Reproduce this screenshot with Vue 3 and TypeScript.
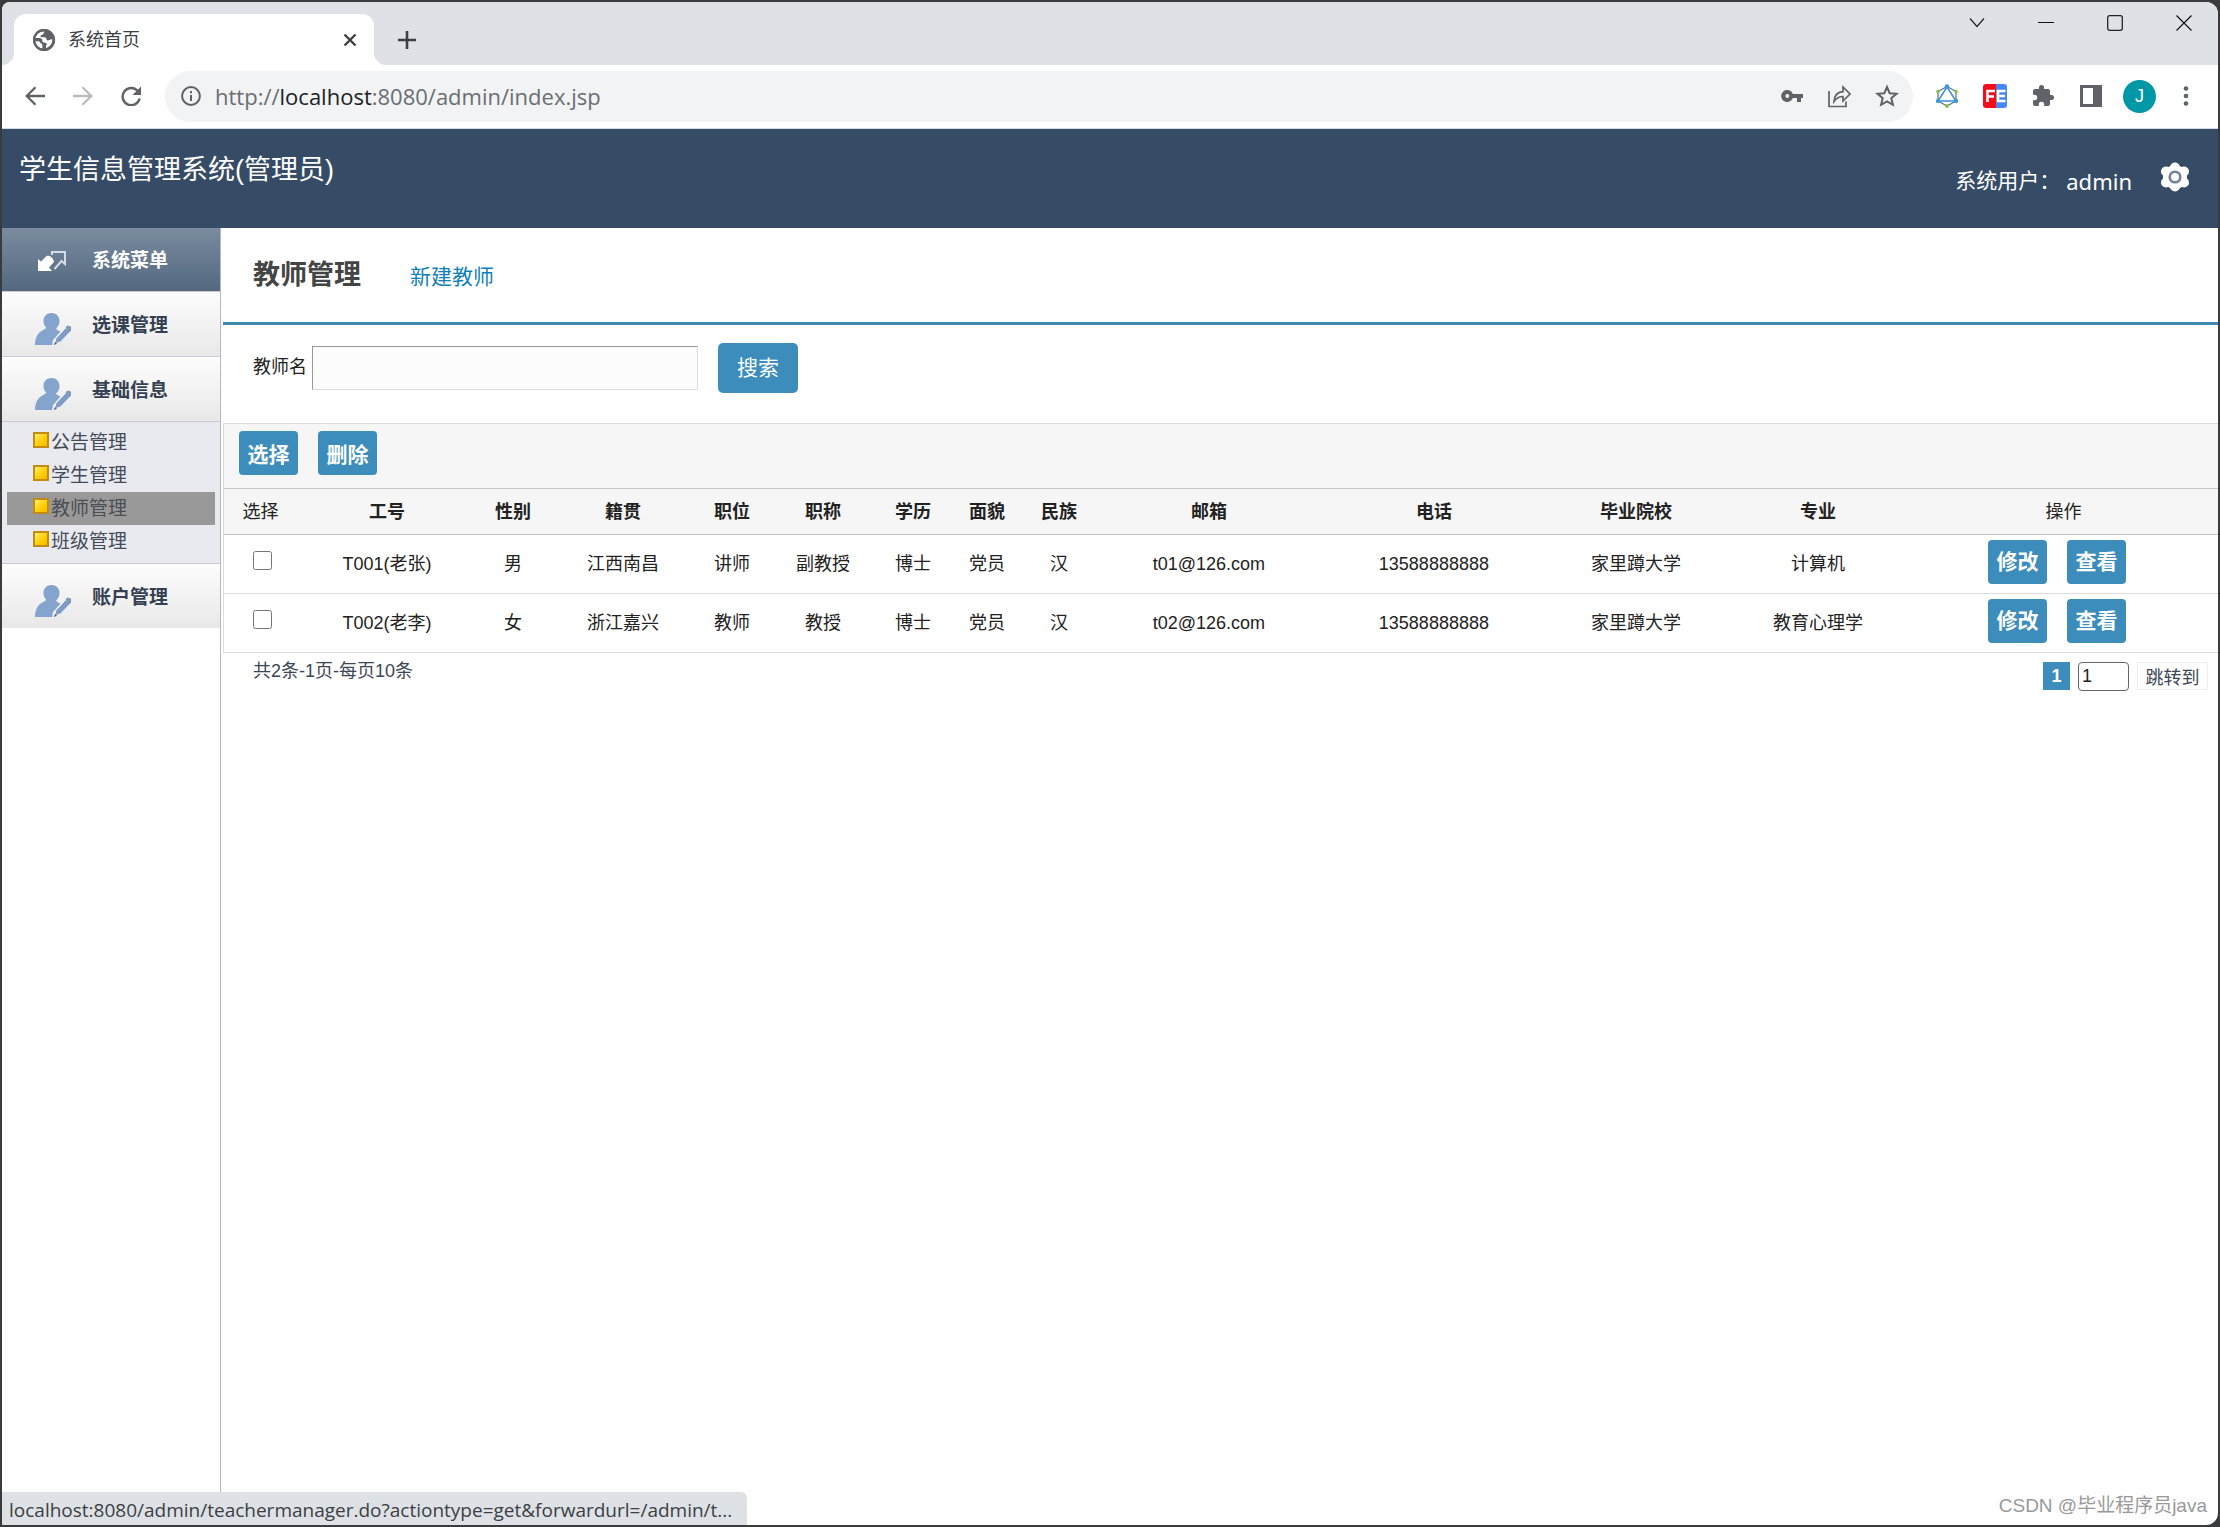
<script setup lang="ts">
import { reactive, ref } from 'vue'

interface Column { key: string; label: string; share: number }
interface Teacher { [key: string]: string }

const tableShare = 1994
const columns: Column[] = [
  { key: 'id', label: '工号', share: 180 },
  { key: 'sex', label: '性别', share: 72 },
  { key: 'origin', label: '籍贯', share: 148 },
  { key: 'post', label: '职位', share: 70 },
  { key: 'rank', label: '职称', share: 112 },
  { key: 'degree', label: '学历', share: 68 },
  { key: 'party', label: '面貌', share: 80 },
  { key: 'nation', label: '民族', share: 64 },
  { key: 'email', label: '邮箱', share: 236 },
  { key: 'phone', label: '电话', share: 214 },
  { key: 'school', label: '毕业院校', share: 190 },
  { key: 'major', label: '专业', share: 174 },
]
const teachers: Teacher[] = [
  { id: 'T001(老张)', sex: '男', origin: '江西南昌', post: '讲师', rank: '副教授', degree: '博士', party: '党员', nation: '汉', email: 't01@126.com', phone: '13588888888', school: '家里蹲大学', major: '计算机' },
  { id: 'T002(老李)', sex: '女', origin: '浙江嘉兴', post: '教师', rank: '教授', degree: '博士', party: '党员', nation: '汉', email: 't02@126.com', phone: '13588888888', school: '家里蹲大学', major: '教育心理学' },
]
const groups = [
  { label: '选课管理', items: [] as string[] },
  { label: '基础信息', items: ['公告管理', '学生管理', '教师管理', '班级管理'] },
  { label: '账户管理', items: [] as string[] },
]
const active = ref('教师管理')
const keyword = ref('')
const page = ref('1')
const checked = reactive<Record<string, boolean>>({})
const width = (share: number) => ({ width: (share / tableShare) * 100 + '%' })
</script>

<template>
  <div class="desktop">
    <div class="window">
      <div class="tabstrip">
        <div class="tab">
          <svg class="globe" viewBox="0 0 24 24" width="24" height="24">
            <circle cx="12" cy="12" r="11" fill="#5f6368" />
            <path d="M12.500 3.500c-1 1-.5 2-1.500 2.800-1 .8-2.500.5-2.500 2 0 .9 1 1 1.800 1 1.200.1 3.500-.3 3.900.9.300 1.200.3 2 1.500 2.200 1.600.2 2-1.500 4.600-1.200.3 4-2.200 7.500-6.300 8.800v-2.200c1-.6 1-2 .1-2.700-1.200-.8-3.200-.2-3.700-1.700-.3-1.200.2-2-.9-2.700-1.500-.8-4-.6-6.200-.6C4 6.500 7.500 3.200 12.500 3.500zM3.400 13.200l3.900.1c.5 2 1.900 2 2.700 2.900.6 1 .2 3 .6 4.300-3.900-.5-6.900-3.500-7.200-7.300z" fill="#fff" />
            <circle cx="12" cy="12" r="10" fill="none" stroke="#5f6368" stroke-width="2" />
          </svg>
          <span class="tab-title">系统首页</span>
          <button class="bare" aria-label="关闭标签页">
            <svg viewBox="0 0 14 14" width="14" height="14"><path d="M1.500 1.500l11 11M12.500 1.500l-11 11" stroke="#3c4043" stroke-width="2.400" /></svg>
          </button>
        </div>
        <button class="bare new-tab" aria-label="新标签页">
          <svg viewBox="0 0 18 18" width="18" height="18"><path d="M9 0v18M0 9h18" stroke="#3c4043" stroke-width="2.600" /></svg>
        </button>
        <div class="controls">
          <button class="bare" aria-label="搜索标签页"><svg viewBox="0 0 16 16" width="16" height="16"><path d="M1 3.500l7 8 7-8" fill="none" stroke="#222" stroke-width="1.200" /></svg></button>
          <button class="bare" aria-label="最小化"><svg viewBox="0 0 16 16" width="16" height="16"><path d="M0 7.500h16" stroke="#111" /></svg></button>
          <button class="bare" aria-label="最大化"><svg viewBox="0 0 16 16" width="16" height="16"><rect x=".7" y=".7" width="14.600" height="14.600" rx="2" fill="none" stroke="#222" stroke-width="1.300" /></svg></button>
          <button class="bare" aria-label="关闭"><svg viewBox="0 0 16 16" width="16" height="16"><path d="M.5.5l15 15M15.500.5l-15 15" stroke="#111" stroke-width="1.200" /></svg></button>
        </div>
      </div>

      <div class="toolbar">
        <div class="nav">
          <button class="bare" aria-label="后退"><svg viewBox="0 0 20 20" width="20" height="20"><path d="M20 10H2M10.500 1.200L1.700 10l8.800 8.800" fill="none" stroke="#5f6368" stroke-width="2.300" /></svg></button>
          <button class="bare" aria-label="前进"><svg viewBox="0 0 20 20" width="20" height="20"><path d="M0 10h18M9.500 1.200l8.800 8.800-8.800 8.800" fill="none" stroke="#babcbe" stroke-width="2.300" /></svg></button>
          <button class="bare" aria-label="刷新"><svg viewBox="0 0 20 20" width="20" height="20"><path d="M17 5.300A8.600 8.600 0 1 0 18.600 12.500" fill="none" stroke="#5f6368" stroke-width="2.400" /><path d="M20 .5v8.500h-8.500z" fill="#5f6368" /></svg></button>
        </div>
        <div class="omnibox">
          <svg viewBox="0 0 20 20" width="20" height="20"><circle cx="10" cy="10" r="8.900" fill="none" stroke="#5f6368" stroke-width="2" /><path d="M9 9h2v6H9zM9 5h2v2.200H9z" fill="#5f6368" /></svg>
          <span class="url">http://<b>localhost</b>:8080/admin/index.jsp</span>
          <div class="omni-icons">
            <svg viewBox="0 0 22 22" width="22" height="22"><path d="M6.300 5a6 6 0 0 1 5.500 4H22v4h-2v4h-4v-4h-4.200A6 6 0 1 1 6.300 5zm0 4a2 2 0 1 0 0 4 2 2 0 0 0 0-4z" fill="#5f6368" fill-rule="evenodd" /></svg>
            <svg viewBox="0 0 24 24" width="24" height="24"><path d="M2 7v15.500h17V17.500M7 17.500c.5-6 3.500-9.500 9-9.800V3l7 7-7 7v-4.500c-4 0-6.500 1.500-9 5z" fill="none" stroke="#5f6368" stroke-width="1.700" /></svg>
            <svg viewBox="0 0 24 24" width="24" height="24"><path d="M12 3l2.700 6.200 6.800.6-5.200 4.400 1.600 6.600L12 17.300l-5.900 3.500 1.600-6.600-5.200-4.400 6.800-.6z" fill="none" stroke="#5f6368" stroke-width="2" /></svg>
          </div>
        </div>
        <div class="extensions">
          <svg viewBox="0 0 24 24" width="24" height="24">
            <path d="M12 2.500l9 5v9.500l-9 5-9-5V7.500z" fill="none" stroke="#5b7083" stroke-width="1.200" />
            <path d="M12 3L3 17h18z" fill="none" stroke="#3b8fd8" stroke-width="1.500" />
            <g fill="#3b9be0"><circle cx="12" cy="2.500" r="2.200" /><circle cx="3" cy="17" r="2.200" /><circle cx="21" cy="17" r="2.200" /></g>
            <g fill="#84c441"><circle cx="3" cy="7.500" r="1.800" /><circle cx="21" cy="7.500" r="1.800" /><circle cx="12" cy="22" r="1.900" /></g>
          </svg>
          <svg viewBox="0 0 24 24" width="24" height="24">
            <path d="M3 0h10v24H3a3 3 0 0 1-3-3V3a3 3 0 0 1 3-3z" fill="#f20d18" /><path d="M13 0h8a3 3 0 0 1 3 3v18a3 3 0 0 1-3 3h-8z" fill="#4787f0" />
            <path d="M12 7H4.500v11M4.500 12.500H11" fill="none" stroke="#fff" stroke-width="2.600" /><path d="M22.500 7H15v10h7.500M15 12h7" fill="none" stroke="#fff" stroke-width="2.600" />
          </svg>
          <svg viewBox="0 0 24 24" width="24" height="24"><path d="M20.500 11H19V7a2 2 0 0 0-2-2h-4V3.500a2.500 2.500 0 0 0-5 0V5H4a2 2 0 0 0-2 2v3.800h1.500a2.700 2.700 0 0 1 0 5.400H2V20a2 2 0 0 0 2 2h3.800v-1.500a2.700 2.700 0 0 1 5.400 0V22H17a2 2 0 0 0 2-2v-4h1.500a2.500 2.500 0 0 0 0-5z" fill="#5f6368" /></svg>
          <svg viewBox="0 0 24 24" width="24" height="24"><path d="M1 1h22v22H1zM4 4v16h10V4z" fill="#5f6368" fill-rule="evenodd" /></svg>
          <span class="avatar">J</span>
          <svg class="dots" viewBox="0 0 6 20" width="6" height="20"><g fill="#5f6368"><circle cx="3" cy="2.500" r="2.300" /><circle cx="3" cy="10" r="2.300" /><circle cx="3" cy="17.500" r="2.300" /></g></svg>
        </div>
      </div>

      <header class="banner">
        <h1>学生信息管理系统(管理员)</h1>
        <div class="user">
          <span>系统用户：</span><span class="name">admin</span>
          <button class="bare gear" aria-label="设置">
            <svg viewBox="0 0 30 30" width="30" height="30"><g fill="#fff"><circle cx="15" cy="15" r="12" /><circle cx="15" cy="5.500" r="5" /><circle cx="15" cy="24.500" r="5" /><circle cx="6" cy="9.500" r="5" /><circle cx="24" cy="9.500" r="5" /><circle cx="6" cy="20.500" r="5" /><circle cx="24" cy="20.500" r="5" /></g><circle cx="15" cy="15" r="5.300" fill="#fff" stroke="#71819a" stroke-width="2.600" /></svg>
          </button>
        </div>
      </header>

      <div class="body">
        <nav class="sidebar">
          <div class="menu-head">
            <svg viewBox="0 0 28 20" width="28" height="20"><path d="M14 4V1h13v12l-3.500-3-7 8" fill="none" stroke="#d5dde6" stroke-width="2" /><path d="M0 20V8l3 2.500 5.500-5.500c3-1 7 2 7.500 6l-5 5.500 3 3.500z" fill="#fff" /></svg>
            <span>系统菜单</span>
          </div>
          <template v-for="g in groups" :key="g.label">
            <button class="group">
              <svg viewBox="0 0 36 32" width="36" height="32">
                <path d="M16.500 0c4.800 0 8 3.500 8 8 0 3-1.300 5.500-3.500 7.500.5 1.500 2.500 2.300 4.500 3L18 27l-1 5H0C0 24 3 19.500 9 16.500c2-1 2.500-1.500 1.800-2.500C9.300 12.500 8.500 10.500 8.500 8c0-4.500 3.200-8 8-8z" fill="#84a3cd" />
                <path d="M19.500 31l1.300-5.500L31 14.500l4.500 4L25.500 29z" fill="#7f9cc6" stroke="#eef1f6" stroke-width="1" />
                <path d="M30.500 14.500l2-2 3.500 1v4l-1.500 1.500z" fill="#8399bb" /><path d="M18.800 32l1.200-3 2 1.800z" fill="#53627b" />
              </svg>
              <span>{{ g.label }}</span>
            </button>
            <ul v-if="g.items.length" class="submenu">
              <li v-for="item in g.items" :key="item">
                <a href="#" :class="{ active: item === active }" @click.prevent="active = item"><i class="bullet"></i>{{ item }}</a>
              </li>
            </ul>
          </template>
        </nav>

        <main class="content">
          <div class="heading">
            <h2>教师管理</h2>
            <a href="#">新建教师</a>
          </div>
          <form class="search" @submit.prevent>
            <label for="teacher-name">教师名</label>
            <input id="teacher-name" v-model="keyword" type="text" />
            <button type="submit">搜索</button>
          </form>
          <section class="panel">
            <div class="actions">
              <button class="btn">选择</button>
              <button class="btn">删除</button>
            </div>
            <table>
              <colgroup>
                <col :style="width(73)" />
                <col v-for="c in columns" :key="c.key" :style="width(c.share)" />
                <col :style="width(313)" />
              </colgroup>
              <thead>
                <tr>
                  <th class="plain">选择</th>
                  <th v-for="c in columns" :key="c.key">{{ c.label }}</th>
                  <th class="plain ops">操作</th>
                </tr>
              </thead>
              <tbody>
                <tr v-for="t in teachers" :key="t.id">
                  <td><input v-model="checked[t.id]" type="checkbox" :aria-label="t.id" /></td>
                  <td v-for="c in columns" :key="c.key">{{ t[c.key] }}</td>
                  <td><div class="row-actions"><button class="btn">修改</button><button class="btn">查看</button></div></td>
                </tr>
              </tbody>
            </table>
          </section>
          <footer class="pager">
            <span class="summary">共2条-1页-每页10条</span>
            <div class="jump">
              <span class="current">1</span>
              <input v-model="page" type="text" aria-label="页码" />
              <button>跳转到</button>
            </div>
          </footer>
        </main>
      </div>
      <div class="status">localhost:8080/admin/teachermanager.do?actiontype=get&amp;forwardurl=/admin/t...</div>
      <div class="watermark">CSDN @毕业程序员java</div>
    </div>
  </div>
</template>

<style>
html, body, #app { height: 100%; margin: 0; }
</style>

<style scoped>
* { box-sizing: border-box; }
.desktop { min-height: 100%; display: flex; padding: 2px; background: #3a3b3c; font-family: "Liberation Sans", "Noto Sans CJK SC", sans-serif; font-size: 18px; color: #222; }
.window { position: relative; flex: 1; display: flex; flex-direction: column; min-width: 0; background: #fff; border-radius: 8px 12px 12px 0; overflow: hidden; }
button, input { font: inherit; margin: 0; }
.bare { display: flex; padding: 0; border: 0; background: none; }
svg { display: block; flex: none; }

.tabstrip { display: flex; align-items: flex-end; height: 63px; padding-left: 12px; background: #dee1e6; }
.tab { position: relative; display: flex; align-items: center; gap: 12px; width: 360px; height: 51px; padding: 0 17px 0 18px; background: #fff; border-radius: 12px 12px 0 0; }
.tab::before, .tab::after { content: ""; position: absolute; bottom: 0; width: 12px; height: 12px; }
.tab::before { left: -12px; background: radial-gradient(circle at 0 0, transparent 12px, #fff 12px); }
.tab::after { right: -12px; background: radial-gradient(circle at 100% 0, transparent 12px, #fff 12px); }
.tab-title { flex: 1; line-height: 26px; color: #3c4043; }
.new-tab { height: 51px; margin-left: 24px; align-items: center; }
.controls { display: flex; align-self: flex-start; gap: 53px; margin-left: auto; padding: 13px 26px 0 0; }

.toolbar { display: flex; align-items: center; height: 64px; padding: 0 29px 1px 23px; border-bottom: 1px solid #d5dbe3; background: #fff; }
.nav { display: flex; gap: 28px; width: 140px; }
.omnibox { flex: 1; display: flex; align-items: center; gap: 14px; height: 51px; padding: 0 14px 0 16px; border-radius: 26px; background: #f1f3f4; }
.url { flex: 1; font-family: "Open Sans", "Noto Sans", sans-serif; font-size: 22px; color: #6a6e72; }
.url b { font-weight: 400; color: #202124; }
.omni-icons { display: flex; align-items: center; gap: 24px; }
.extensions { display: flex; align-items: center; gap: 24px; margin-left: 22px; }
.avatar { width: 33px; height: 33px; margin: 0 -3px 0 -4px; border-radius: 50%; background: #0097a7; color: #fff; font-size: 18px; line-height: 33px; text-align: center; }
.dots { margin-left: 6px; }

.banner { display: flex; justify-content: space-between; align-items: flex-start; height: 99px; padding: 20px 28px 0 17px; background: #364c66; color: #fff; }
h1 { margin: 0; font-size: 27px; font-weight: 400; line-height: 42px; }
.user { display: flex; align-items: center; height: 64px; font-size: 21px; line-height: 30px; }
.name { margin-left: 6px; font-family: "Noto Sans", sans-serif; font-size: 22px; }
.gear { align-self: flex-start; margin: 13px 0 0 28px; }

.body { flex: 1; display: flex; min-height: 0; }
.sidebar { width: 219px; flex: none; border-right: 1px solid #b4b8be; }
.menu-head, .group { display: flex; align-items: center; width: 100%; font-size: 19px; font-weight: 700; line-height: 28px; }
.menu-head { height: 63px; padding: 3px 0 0 36px; gap: 26px; background: linear-gradient(#7a8b9f, #53687f); color: #fff; }
.group { height: 65px; padding: 3px 0 0 33px; gap: 21px; border: 0; border-top: 1px solid #c9cbd0; background: linear-gradient(#fdfdfd, #e8e8e8); color: #354052; }
.group svg { margin-top: 6px; }
.submenu { margin: 0; padding: 4px 5px 5px; list-style: none; border-top: 1px solid #c9cbd0; background: #e8eaef; }
.submenu a { display: flex; align-items: center; height: 33px; padding-left: 26px; gap: 2px; font-size: 19px; line-height: 28px; color: #444b57; text-decoration: none; }
.submenu a.active { background: #999; color: #4b4e54; }
.bullet { width: 16px; height: 16px; margin-bottom: 6px; border: 2px solid #c38a14; background: linear-gradient(135deg, #ffef6a, #fc0 60%, #f5b800); }

.content { flex: 1; min-width: 0; padding-left: 2px; }
.heading { display: flex; align-items: center; gap: 49px; height: 97px; padding-left: 30px; border-bottom: 3px solid #4089b0; }
h2 { margin: 0; font-size: 27px; font-weight: 700; line-height: 40px; color: #444; }
.heading a { font-size: 21px; color: #1080b8; text-decoration: none; }
.search { display: flex; align-items: flex-start; height: 98px; padding: 18px 30px 0; }
.search label { line-height: 48px; }
.search input { width: 386px; height: 44px; margin: 3px 20px 0 5px; padding: 0 8px; border: 1px solid #ddd; border-top-color: #999; border-left-color: #999; background: #fcfcfc; }
.search button { width: 80px; height: 50px; padding: 0; border: 0; border-radius: 5px; background: #3c8dbc; color: #fff; font-size: 21px; line-height: 30px; }
.panel { border: 1px solid #ddd; border-right: 0; border-bottom: 0; }
.actions { display: flex; gap: 20px; height: 64px; padding: 7px 15px; background: #f6f6f6; }
.btn { width: 59px; height: 44px; padding: 0; border: 0; border-radius: 4px; background: #3c8dbc; color: #fff; font-size: 21px; font-weight: 700; }
table { width: 100%; table-layout: fixed; border-collapse: collapse; text-align: center; line-height: 26px; }
th { height: 46px; padding: 0; border-top: 1px solid #c6c6c6; border-bottom: 1px solid #c6c6c6; background: #f6f6f6; }
th.plain { font-weight: 400; }
th.ops { padding-left: 4px; }
td { height: 59px; padding: 0; border-bottom: 1px solid #ddd; }
td input { display: block; width: 19px; height: 19px; margin: 0 auto 8px; position: relative; left: 2px; }
.row-actions { display: flex; justify-content: center; gap: 20px; padding: 0 9px 5px 0; }
.pager { display: flex; justify-content: space-between; padding: 4px 10px 0 30px; color: #3c4654; }
.summary { line-height: 28px; }
.jump { display: flex; gap: 8px; padding-top: 5px; }
.current { width: 27px; height: 28px; background: #3c8dbc; color: #fff; font-weight: 700; line-height: 28px; text-align: center; }
.jump input { width: 51px; height: 29px; padding: 0 3px; border: 1px solid #666; border-radius: 4px; color: #222; }
.jump button { width: 71px; height: 28px; padding: 0; border: 1px solid #eee; background: #fff; color: #3c4654; }

.status { position: absolute; left: 0; bottom: 0; height: 33px; padding: 0 15px 0 7px; border-radius: 0 6px 0 0; background: #dee1e6; color: #3c4043; font-family: "Open Sans", "Noto Sans", sans-serif; font-size: 19px; line-height: 36px; white-space: nowrap; }
.watermark { position: absolute; right: 11px; bottom: 4px; color: #999; font-size: 19px; line-height: 30px; }
</style>
